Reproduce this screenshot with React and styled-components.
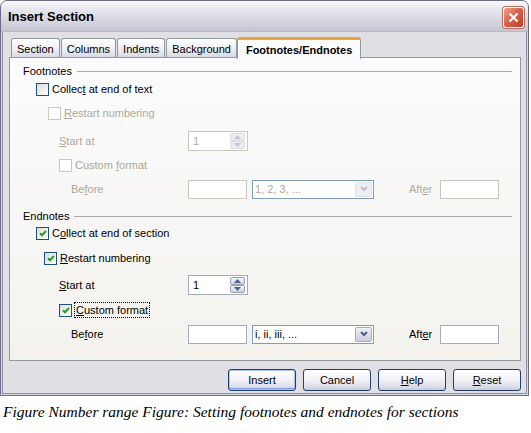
import React from "react";
import styled, { createGlobalStyle } from "styled-components";

const GlobalStyle = createGlobalStyle`
  html, body {
    margin: 0;
    padding: 0;
    background: #ffffff;
  }
  body {
    font-family: "Liberation Sans", Arial, sans-serif;
    font-size: 11px;
    color: #000;
  }
`;

const DISABLED = "#aca899";

function Check() {
  return (
    <svg width="8" height="7" viewBox="0 0 8 7">
      <path d="M1 3.2 L3 5.3 L7 1" fill="none" stroke="#21a121" strokeWidth="2" />
    </svg>
  );
}

function CheckBox({ checked, disabled }) {
  return <Box $disabled={disabled}>{checked ? <Check /> : null}</Box>;
}

function SpinField({ value, disabled }) {
  return (
    <Field $disabled={disabled}>
      <FieldText $disabled={disabled}>{value}</FieldText>
      <SpinButtons>
        <SpinBtn $disabled={disabled}>
          <svg width="7" height="4" viewBox="0 0 7 4">
            <path d="M0 4 L3.5 0 L7 4 Z" fill={disabled ? "#c5c5cf" : "#4d6185"} />
          </svg>
        </SpinBtn>
        <SpinBtn $disabled={disabled}>
          <svg width="7" height="4" viewBox="0 0 7 4">
            <path d="M0 0 L3.5 4 L7 0 Z" fill={disabled ? "#c5c5cf" : "#4d6185"} />
          </svg>
        </SpinBtn>
      </SpinButtons>
    </Field>
  );
}

function Dropdown({ value, disabled }) {
  return (
    <Select $disabled={disabled}>
      <FieldText $disabled={disabled}>{value}</FieldText>
      <DropBtn $disabled={disabled}>
        <svg width="8" height="6" viewBox="0 0 8 6">
          <path
            d="M1 1 L4 4 L7 1"
            fill="none"
            stroke={disabled ? "#c0c0cc" : "#4d6185"}
            strokeWidth="2"
          />
        </svg>
      </DropBtn>
    </Select>
  );
}

function NoteGroup({ title, data }) {
  const d = data;
  return (
    <Group $first={d.first}>
      <GroupHeader>
        <span>{title}</span>
        <GroupLine />
      </GroupHeader>
      <Row $h={d.heights[0]}>
        <LabelCell $indent={13}>
          <CheckBox checked={d.collect.checked} />
          <Label>{d.collect.label}</Label>
        </LabelCell>
      </Row>
      <Row $h={d.heights[1]}>
        <LabelCell $indent={d.restartIndent}>
          <CheckBox checked={d.enabled} disabled={!d.enabled} />
          <Label $disabled={!d.enabled}>
            <u>R</u>estart numbering
          </Label>
        </LabelCell>
      </Row>
      <Row $h={d.heights[2]}>
        <LabelCell $indent={36}>
          <Label $disabled={!d.enabled}>
            <u>S</u>tart at
          </Label>
        </LabelCell>
        <SpinField value="1" disabled={!d.enabled} />
      </Row>
      <Row $h={d.heights[3]}>
        <LabelCell $indent={36}>
          <CheckBox checked={d.enabled} disabled={!d.enabled} />
          <Label $disabled={!d.enabled} $focus={d.enabled}>
            {d.customLabel}
          </Label>
        </LabelCell>
      </Row>
      <Row $h={d.heights[4]}>
        <LabelCell $indent={48}>
          <Label $disabled={!d.enabled}>
            Be<u>f</u>ore
          </Label>
        </LabelCell>
        <TextBox $disabled={!d.enabled} />
        <Dropdown value={d.format} disabled={!d.enabled} />
        <AfterLabel $disabled={!d.enabled}>
          Aft<u>e</u>r
        </AfterLabel>
        <TextBox $disabled={!d.enabled} />
      </Row>
    </Group>
  );
}

const footnotes = {
  first: true,
  enabled: false,
  heights: [22, 26, 30, 18, 30],
  restartIndent: 25,
  collect: {
    checked: false,
    label: (
      <>
        Collec<u>t</u> at end of text
      </>
    ),
  },
  customLabel: (
    <>
      Custom <u>f</u>ormat
    </>
  ),
  format: "1, 2, 3, ...",
};

const endnotes = {
  first: false,
  enabled: true,
  heights: [20, 30, 24, 26, 22],
  restartIndent: 21,
  collect: {
    checked: true,
    label: (
      <>
        C<u>o</u>llect at end of section
      </>
    ),
  },
  customLabel: (
    <>
      <u>C</u>ustom format
    </>
  ),
  format: "i, ii, iii, ...",
};

const tabs = ["Section", "Columns", "Indents", "Background", "Footnotes/Endnotes"];

export default function App() {
  return (
    <>
      <GlobalStyle />
      <Window>
        <TitleBar>
          <Title>Insert Section</Title>
          <CloseButton>
            <svg width="11" height="11" viewBox="0 0 11 11">
              <path d="M1.5 1.5 L9.5 9.5 M9.5 1.5 L1.5 9.5" stroke="#fff" strokeWidth="2.2" />
            </svg>
          </CloseButton>
        </TitleBar>
        <Body>
          <TabStrip>
            {tabs.map((t, i) => (
              <Tab key={t} $active={i === tabs.length - 1}>
                {t}
              </Tab>
            ))}
          </TabStrip>
          <Panel>
            <NoteGroup title="Footnotes" data={footnotes} />
            <NoteGroup title="Endnotes" data={endnotes} />
          </Panel>
          <ButtonRow>
            <Button $default>Insert</Button>
            <Button>Cancel</Button>
            <Button>
              <u>H</u>elp
            </Button>
            <Button>
              <u>R</u>eset
            </Button>
          </ButtonRow>
        </Body>
      </Window>
      <Caption>Figure Number range Figure: Setting footnotes and endnotes for sections</Caption>
    </>
  );
}

const Window = styled.div`
  width: 529px;
  height: 396px;
  box-sizing: border-box;
  border: 1px solid #6c6c86;
  border-radius: 7px 7px 0 0;
  background: #e0dfe3;
  box-shadow: inset 0 0 0 1px #d8d8e2, inset 0 0 0 2px #8e8ea6;
  display: flex;
  flex-direction: column;
  overflow: hidden;
`;

const TitleBar = styled.div`
  height: 30px;
  flex-shrink: 0;
  display: flex;
  align-items: center;
  justify-content: space-between;
  padding: 0 4px 0 7px;
  background: linear-gradient(
    #fbfbfd 0%,
    #ececf2 18%,
    #dcdce6 50%,
    #d0d0dc 80%,
    #c4c4d2 100%
  );
  border-bottom: 1px solid #b8b8c8;
`;

const Title = styled.div`
  font-family: "Liberation Sans", Arial, sans-serif;
  font-weight: bold;
  font-size: 13px;
  color: #000;
  padding-top: 1px;
`;

const CloseButton = styled.div`
  width: 21px;
  height: 21px;
  box-sizing: border-box;
  border: 1px solid #ffffff;
  border-radius: 3px;
  background: linear-gradient(135deg, #eba596 0%, #d6624e 45%, #b8402c 100%);
  box-shadow: 0 0 0 1px #c06a5c;
  display: flex;
  align-items: center;
  justify-content: center;
  margin-top: 3px;
`;

const Body = styled.div`
  flex: 1;
  display: flex;
  flex-direction: column;
  padding: 4px 8px 0 8px;
`;

const TabStrip = styled.div`
  height: 21px;
  display: flex;
  align-items: flex-end;
  gap: 1px;
  padding-left: 2px;
`;

const Tab = styled.div`
  height: ${(p) => (p.$active ? 22 : 19)}px;
  box-sizing: border-box;
  display: flex;
  align-items: center;
  padding: 0 ${(p) => (p.$active ? 8 : 5)}px;
  margin: ${(p) => (p.$active ? "0 0 -2px -1px" : "0")};
  border: 1px solid #919b9c;
  border-bottom: none;
  border-top: ${(p) => (p.$active ? "3px solid #e8a33b" : "1px solid #919b9c")};
  border-radius: 3px 3px 0 0;
  background: ${(p) =>
    p.$active ? "#fcfcfe" : "linear-gradient(#ffffff, #f0f0f4 50%, #d9d9e3)"};
  font-weight: ${(p) => (p.$active ? "bold" : "normal")};
  position: relative;
  z-index: ${(p) => (p.$active ? 1 : 0)};
  padding-top: ${(p) => (p.$active ? 0 : 1)}px;
  white-space: nowrap;
`;

const Panel = styled.div`
  height: 304px;
  width: 512px;
  box-sizing: border-box;
  border: 1px solid #919b9c;
  background: linear-gradient(#fcfcfe, #f3f2ed);
  padding: 6px 8px 0 13px;
`;

const Group = styled.div`
  margin-top: ${(p) => (p.$first ? 0 : 5)}px;
`;

const GroupHeader = styled.div`
  height: 14px;
  display: flex;
  align-items: center;
  gap: 5px;
  white-space: nowrap;
`;

const GroupLine = styled.div`
  flex: 1;
  height: 1px;
  background: #a9a9ab;
  margin-top: 1px;
`;

const Row = styled.div`
  display: flex;
  align-items: center;
  height: ${(p) => p.$h}px;
`;

const LabelCell = styled.div`
  width: 165px;
  flex-shrink: 0;
  box-sizing: border-box;
  padding-left: ${(p) => p.$indent}px;
  display: flex;
  align-items: center;
  gap: 3px;
  white-space: nowrap;
`;

const Label = styled.span`
  color: ${(p) => (p.$disabled ? DISABLED : "#000")};
  outline: ${(p) => (p.$focus ? "1px dotted #000" : "none")};
  padding: ${(p) => (p.$focus ? "0 1px" : "0")};
  line-height: 14px;
`;

const Box = styled.span`
  width: 13px;
  height: 13px;
  box-sizing: border-box;
  flex-shrink: 0;
  display: inline-flex;
  align-items: center;
  justify-content: center;
  border: 1px solid ${(p) => (p.$disabled ? "#cac8bb" : "#1c5180")};
  background: ${(p) =>
    p.$disabled ? "#ffffff" : "linear-gradient(135deg, #dcdcd7, #ffffff)"};
`;

const Field = styled.div`
  width: 60px;
  height: 20px;
  box-sizing: border-box;
  border: 1px solid ${(p) => (p.$disabled ? "#c9c7ba" : "#a5acb2")};
  background: #fff;
  display: flex;
  align-items: center;
  justify-content: space-between;
  padding: 0 2px 0 4px;
`;

const FieldText = styled.span`
  color: ${(p) => (p.$disabled ? DISABLED : "#000")};
  white-space: nowrap;
`;

const SpinButtons = styled.div`
  display: flex;
  flex-direction: column;
  width: 15px;
  height: 16px;
`;

const SpinBtn = styled.div`
  flex: 1;
  box-sizing: border-box;
  border: 1px solid ${(p) => (p.$disabled ? "#dcdce4" : "#9aa0b8")};
  border-radius: 2px;
  background: ${(p) =>
    p.$disabled ? "#ececf0" : "linear-gradient(#f4f4f8, #cfd2de)"};
  display: flex;
  align-items: center;
  justify-content: center;
`;

const TextBox = styled.div`
  width: 59px;
  height: 19px;
  box-sizing: border-box;
  border: 1px solid ${(p) => (p.$disabled ? "#c9c7ba" : "#a5acb2")};
  background: #fff;
`;

const Select = styled.div`
  width: 122px;
  height: 19px;
  margin-left: 5px;
  box-sizing: border-box;
  border: 1px solid #7f9db9;
  background: #fff;
  display: flex;
  align-items: center;
  justify-content: space-between;
  padding: 0 1px 0 2px;
`;

const DropBtn = styled.div`
  width: 17px;
  height: 15px;
  box-sizing: border-box;
  border: 1px solid ${(p) => (p.$disabled ? "#e0e0e6" : "#a7abbe")};
  border-radius: 2px;
  background: ${(p) =>
    p.$disabled ? "#eeeef2" : "linear-gradient(#eef0f6, #c9ccdb)"};
  display: flex;
  align-items: center;
  justify-content: center;
`;

const AfterLabel = styled.span`
  color: ${(p) => (p.$disabled ? DISABLED : "#000")};
  margin-left: 35px;
  margin-right: 8px;
`;

const ButtonRow = styled.div`
  display: flex;
  justify-content: flex-end;
  gap: 7px;
  margin-top: 8px;
  width: 512px;
`;

const Button = styled.div`
  width: 68px;
  height: 22px;
  box-sizing: border-box;
  border: 1px solid #243e6c;
  border-radius: 3px;
  background: linear-gradient(#ffffff, #f2f2f7 50%, #dcdce8 85%, #c8c8da);
  box-shadow: ${(p) =>
    p.$default ? "inset 0 0 0 1px #a9c2ee, inset 0 -1px 0 1px #7e9ee0" : "none"};
  display: flex;
  align-items: center;
  justify-content: center;
`;

const Caption = styled.div`
  font-family: "Liberation Serif", "Times New Roman", serif;
  font-style: italic;
  font-size: 15.5px;
  line-height: 20px;
  margin: 6px 0 0 3px;
  color: #000;
`;
